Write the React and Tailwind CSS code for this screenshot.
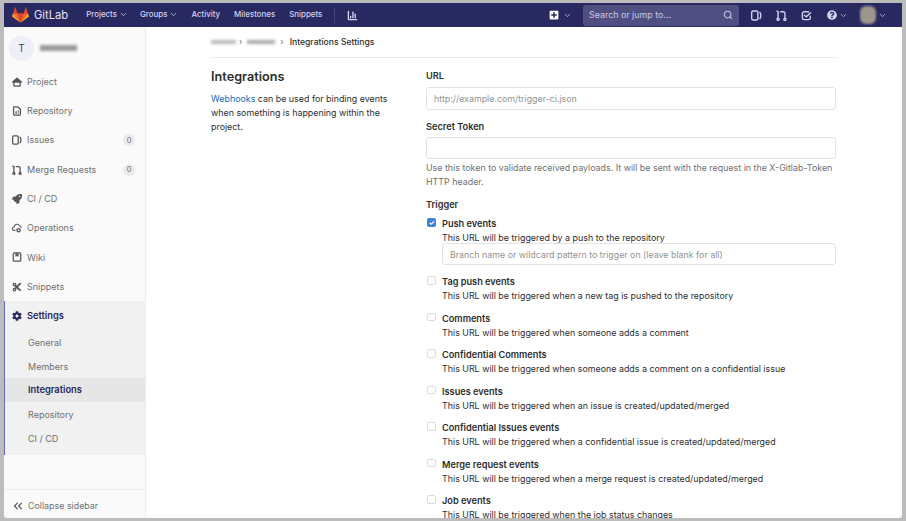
import React from 'react';
import { ChevronDown, ChevronsLeft, Search, ChartColumn } from 'lucide-react';
import { FaCog, FaRocket, FaQuestionCircle, FaPlusSquare, FaCut } from 'react-icons/fa';

// gitlab's own nav icons, redrawn
function IssuesIcon({ size = 10 }) {
    return (
        <svg width={size} height={size} viewBox="0 0 16 16" fill="none" stroke="currentColor" strokeWidth="2">
            <rect x="1" y="1.5" width="9" height="13" rx="2" />
            <path d="M13 3.5c1.5 2.5 1.5 6.5 0 9" strokeLinecap="round" />
        </svg>
    );
}

function MergeIcon({ size = 10 }) {
    return (
        <svg width={size} height={size} viewBox="0 0 16 16" fill="none" stroke="currentColor" strokeWidth="2">
            <circle cx="3" cy="13.5" r="1.6" />
            <circle cx="13" cy="13.5" r="1.6" />
            <path d="M3 11.5V3l-1.5-1.5M3 3h1M13 11.5V5a2.5 2.5 0 0 0-2.5-2.5H7" strokeLinecap="round" />
        </svg>
    );
}

function TodoIcon({ size = 11 }) {
    return (
        <svg width={size} height={size} viewBox="0 0 16 16" fill="none" stroke="currentColor" strokeWidth="2">
            <path d="M13.5 9v2.5a2.5 2.5 0 0 1-2.5 2.5H4.500a2.500 2.500 0 0 1-2.500-2.500V5A2.500 2.500 0 0 1 4.500 2.500H11" strokeLinecap="round" />
            <path d="M5 7.500l2.500 2.500L14 4" strokeLinecap="round" strokeLinejoin="round" />
        </svg>
    );
}

function ProjectIcon({ size = 10 }) {
    return (
        <svg width={size} height={size} viewBox="0 0 16 16" fill="none" stroke="currentColor" strokeWidth="2">
            <path d="M1 8l7-6 7 6z" fill="currentColor" strokeLinejoin="round" />
            <path d="M3 8v5.500a1 1 0 0 0 1 1h8a1 1 0 0 0 1-1V8" />
        </svg>
    );
}

function RepoIcon({ size = 10 }) {
    return (
        <svg width={size} height={size} viewBox="0 0 16 16" fill="none" stroke="currentColor" strokeWidth="2">
            <path d="M3 1.500h6.500L13.500 5.500V13a1.500 1.500 0 0 1-1.500 1.500H4A1.500 1.500 0 0 1 2.500 13V2z" strokeLinejoin="round" />
            <path d="M6 9h1.500v3H6zM9 7.500h1.500v4.500" strokeWidth="1.200" />
        </svg>
    );
}

function OpsIcon({ size = 10 }) {
    return (
        <svg width={size} height={size} viewBox="0 0 16 16" fill="none" stroke="currentColor" strokeWidth="1.800">
            <path d="M5 12H4a3 3 0 0 1-.5-6A4.500 4.500 0 0 1 12 4.500a3 3 0 0 1 2.500 2.500" strokeLinecap="round" />
            <circle cx="10.500" cy="11.500" r="2.500" strokeWidth="2.200" />
        </svg>
    );
}

function WikiIcon({ size = 10 }) {
    return (
        <svg width={size} height={size} viewBox="0 0 16 16" fill="none" stroke="currentColor" strokeWidth="2">
            <rect x="2" y="1.500" width="12" height="13" rx="1.500" />
            <path d="M6 2v5l2-1.500L10 7V2" fill="currentColor" strokeWidth="1" />
        </svg>
    );
}

function Tanuki() {
    return (
        <svg width="17" height="16" viewBox="0 0 36 33">
            <path d="M18 33 L24.6 12.6 H11.4 Z" fill="#e24329" />
            <path d="M18 33 L11.4 12.6 H2.2 Z" fill="#fc6d26" />
            <path d="M2.2 12.6 L0.2 18.8 C0 19.4 0.2 20 0.7 20.4 L18 33 Z" fill="#fca326" />
            <path d="M2.2 12.6 H11.4 L7.5 0.5 C7.3 -0.1 6.4 -0.1 6.2 0.5 Z" fill="#e24329" />
            <path d="M18 33 L24.6 12.6 H33.8 Z" fill="#fc6d26" />
            <path d="M33.8 12.6 L35.8 18.8 C36 19.4 35.8 20 35.3 20.4 L18 33 Z" fill="#fca326" />
            <path d="M33.8 12.6 H24.6 L28.5 0.5 C28.7 -0.1 29.6 -0.1 29.8 0.5 Z" fill="#e24329" />
        </svg>
    );
}

const navItems = [
    { label: 'Project', icon: ProjectIcon },
    { label: 'Repository', icon: RepoIcon },
    { label: 'Issues', icon: IssuesIcon, count: 0 },
    { label: 'Merge Requests', icon: MergeIcon, count: 0 },
    { label: 'CI / CD', icon: FaRocket },
    { label: 'Operations', icon: OpsIcon },
    { label: 'Wiki', icon: WikiIcon },
    { label: 'Snippets', icon: FaCut },
];

const subItems = ['General', 'Members', 'Integrations', 'Repository', 'CI / CD'];

const triggers = [
    { title: 'Tag push events', text: 'This URL will be triggered when a new tag is pushed to the repository' },
    { title: 'Comments', text: 'This URL will be triggered when someone adds a comment' },
    { title: 'Confidential Comments', text: 'This URL will be triggered when someone adds a comment on a confidential issue' },
    { title: 'Issues events', text: 'This URL will be triggered when an issue is created/updated/merged' },
    { title: 'Confidential Issues events', text: 'This URL will be triggered when a confidential issue is created/updated/merged' },
    { title: 'Merge request events', text: 'This URL will be triggered when a merge request is created/updated/merged' },
    { title: 'Job events', text: 'This URL will be triggered when the job status changes' },
];

function TopBar() {
    return (
        <div className="h-[24px] shrink-0 bg-[#292961] flex items-center text-[#d1d1f0] text-[7.9px] font-medium">
            <div className="w-[8px]" />
            <Tanuki />
            <span className="ml-[5px] mr-[18px] text-[11.2px] font-normal text-[#e4e4f5]">GitLab</span>
            <span className="flex items-center gap-[2px]">Projects <ChevronDown size={9} /></span>
            <span className="ml-[12px] flex items-center gap-[2px]">Groups <ChevronDown size={9} /></span>
            <span className="ml-[13px]">Activity</span>
            <span className="ml-[14px]">Milestones</span>
            <span className="ml-[14px]">Snippets</span>
            <div className="ml-[12px] h-[15px] w-px bg-[#45457a]" />
            <ChartColumn size={11} strokeWidth={3} className="ml-[12px]" />
            <div className="flex-1" />
            <FaPlusSquare size={10} className="text-white" />
            <ChevronDown size={9} className="ml-[4px]" />
            <div className="ml-[11px] w-[156px] h-[21px] rounded-[3px] bg-[#4f4f82] flex items-center justify-between pl-[6px] pr-[6px] text-[8.9px] font-normal text-[#c9c9e2]">
                <span>Search or jump to...</span>
                <Search size={10} strokeWidth={2.5} />
            </div>
            <span className="ml-[12px]"><IssuesIcon size={11} /></span>
            <span className="ml-[14px]"><MergeIcon size={11} /></span>
            <span className="ml-[14px]"><TodoIcon size={11} /></span>
            <FaQuestionCircle size={10} className="ml-[15px]" />
            <ChevronDown size={9} className="ml-[2px]" />
            <div className="ml-[12px] w-[16px] h-[18px] bg-[#9c968c] rounded-[6px] blur-[1px]" />
            <ChevronDown size={9} className="ml-[2px] mr-[15px]" />
        </div>
    );
}

function Sidebar() {
    return (
        <div className="w-[142px] shrink-0 bg-[#fafafa] border-r border-[#ececec] flex flex-col text-[9px] text-[#707070]">
            <div className="h-[39px] mt-[1px] flex items-center pl-[5px] pt-[1px]">
                <div className="w-[25px] h-[25px] rounded-full bg-[#eeeef8] flex items-center justify-center text-[10px] text-[#444]">T</div>
                <div className="ml-[6px] w-[37px] h-[6px] bg-[#999] blur-[1.5px]" />
            </div>
            <div>
                {navItems.map(({ label, icon: Icon, count }) => (
                    <div key={label} className="h-[29.3px] flex items-center pl-[8px] pr-[10px]">
                        <span className="w-[10px] shrink-0 text-[#555]"><Icon size={10} /></span>
                        <span className="ml-[5px] flex-1">{label}</span>
                        {count !== undefined && (
                            <span className="w-[12px] h-[12px] rounded-full bg-[#eaeaea] flex items-center justify-center text-[7.5px]">{count}</span>
                        )}
                    </div>
                ))}
            </div>
            <div className="h-[154px] bg-[#f1f1f1] border-l-[1px] border-[#6666c4]">
                <div className="h-[29px] flex items-center pl-[7px] text-[#292961] font-semibold text-[9.3px]">
                    <FaCog size={10} className="shrink-0" />
                    <span className="ml-[5px]">Settings</span>
                </div>
                {subItems.map((s) => (
                    <div key={s} className={s === 'Integrations' ? 'h-[24px] flex items-center pl-[23px] bg-[#e6e6e6] text-[#292961] font-semibold text-[9.3px]' : 'h-[24px] flex items-center pl-[23px]'}>
                        {s}
                    </div>
                ))}
            </div>
            <div className="flex-1" />
            <div className="h-[29px] border-t border-[#ececec] flex items-center pl-[7px] pt-[3px] text-[8.9px]">
                <ChevronsLeft size={14} className="text-[#555]" />
                <span className="ml-[3px]">Collapse sidebar</span>
            </div>
        </div>
    );
}

function Box({ placeholder, className }) {
    return (
        <input
            readOnly
            placeholder={placeholder}
            className={`block w-full rounded-[3px] border border-[#e3e3e3] bg-white px-[7px] text-[8.85px] placeholder:text-[#939393] ${className}`}
        />
    );
}

function Content() {
    return (
        <div className="flex-1 min-w-0 overflow-hidden bg-white pl-[65px] pr-[66px] text-[8.9px] leading-[14px] text-[#2e2e2e]">
            <div className="h-[31px] border-b border-[#ececec] flex items-center text-[#707070] text-[8.6px]">
                <span className="w-[25px] h-[4px] bg-[#bbb] blur-[1.5px]" />
                <span className="mx-[3px]">›</span>
                <span className="ml-[2px] w-[28px] h-[4px] bg-[#aaa] blur-[1.5px]" />
                <span className="ml-[5px] mr-[6px]">›</span>
                <span className="text-[#2e2e2e] font-medium">Integrations Settings</span>
            </div>
            <div className="flex">
                <div className="w-[215px] shrink-0 pt-[10px]">
                    <h4 className="text-[12.7px] leading-[18px] font-semibold">Integrations</h4>
                    <p className="mt-[6px] w-[190px]"><span className="text-[#1b69b6]">Webhooks</span> can be used for binding events when something is happening within the project.</p>
                </div>
                <div className="flex-1 min-w-0 pt-[11px]">
                    <div className="font-semibold text-[9.2px]">URL</div>
                    <Box placeholder="http://example.com/trigger-ci.json" className="mt-[3.5px] h-[23px]" />
                    <div className="mt-[10px] font-semibold text-[9.2px]">Secret Token</div>
                    <Box className="mt-[3px] h-[22.5px]" />
                    <p className="mt-[2px] text-[#707070]">Use this token to validate received payloads. It will be sent with the request in the X-Gitlab-Token HTTP header.</p>
                    <div className="mt-[9px] font-semibold text-[9.2px]">Trigger</div>
                    <div className="mt-[5px] flex">
                        <div className="w-[16px] shrink-0 pt-[1px] pl-[1px]">
                            <div className="w-[9px] h-[9px] rounded-[2px] bg-[#3b84d6] text-white flex items-center justify-center text-[7px] leading-none font-bold">✓</div>
                        </div>
                        <div className="flex-1 min-w-0">
                            <div className="font-semibold text-[9.2px]">Push events</div>
                            <div>This URL will be triggered by a push to the repository</div>
                            <Box placeholder="Branch name or wildcard pattern to trigger on (leave blank for all)" className="mt-[-2px] h-[22px]" />
                        </div>
                    </div>
                    <div className="mt-[10px]">
                        {triggers.map((t) => (
                            <div key={t.title} className="flex h-[36.5px]">
                                <div className="w-[16px] shrink-0 pt-[1px] pl-[1px]">
                                    <div className="w-[8.500px] h-[8.500px] rounded-[2px] border border-[#dcdcdc] bg-white" />
                                </div>
                                <div className="flex-1 min-w-0">
                                    <div className="font-semibold text-[9.2px]">{t.title}</div>
                                    <div>{t.text}</div>
                                </div>
                            </div>
                        ))}
                    </div>
                </div>
            </div>
        </div>
    );
}

export default function App() {
    return (
        <div className="h-screen overflow-hidden bg-[#bcbcbc] pt-[3px] pl-[4px] pr-[4px] pb-[3px] font-['Inter',sans-serif]">
            <div className="h-full flex flex-col rounded-b-[3px] overflow-hidden">
                <TopBar />
                <div className="flex-1 min-h-0 flex">
                    <Sidebar />
                    <Content />
                </div>
            </div>
        </div>
    );
}
